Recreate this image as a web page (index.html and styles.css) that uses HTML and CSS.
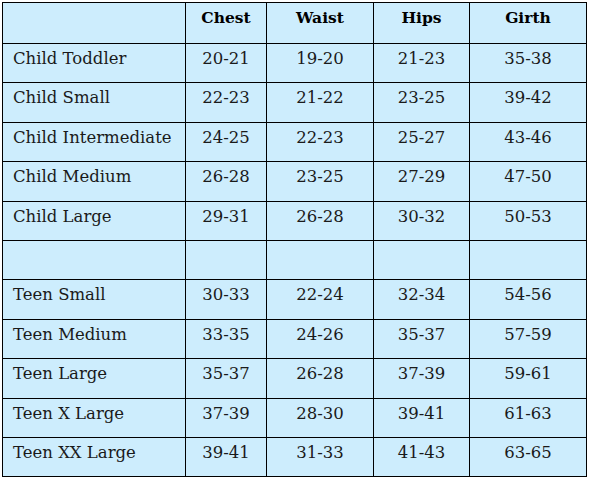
FILE: index.html
```html
<!DOCTYPE html>
<html>
<head>
<meta charset="utf-8">
<link rel="stylesheet" href="styles.css">
</head>
<body>
<div class="page">
<table class="sizes">
  <colgroup>
    <col class="c-name"><col class="c-chest"><col class="c-waist"><col class="c-hips"><col class="c-girth">
  </colgroup>
  <thead>
    <tr class="head"><th></th><th>Chest</th><th>Waist</th><th>Hips</th><th>Girth</th></tr>
  </thead>
  <tbody>
    <tr><td>Child Toddler</td><td>20-21</td><td>19-20</td><td>21-23</td><td>35-38</td></tr>
    <tr><td>Child Small</td><td>22-23</td><td>21-22</td><td>23-25</td><td>39-42</td></tr>
    <tr><td>Child Intermediate</td><td>24-25</td><td>22-23</td><td>25-27</td><td>43-46</td></tr>
    <tr><td>Child Medium</td><td>26-28</td><td>23-25</td><td>27-29</td><td>47-50</td></tr>
    <tr><td>Child Large</td><td>29-31</td><td>26-28</td><td>30-32</td><td>50-53</td></tr>
    <tr><td></td><td></td><td></td><td></td><td></td></tr>
    <tr><td>Teen Small</td><td>30-33</td><td>22-24</td><td>32-34</td><td>54-56</td></tr>
    <tr><td>Teen Medium</td><td>33-35</td><td>24-26</td><td>35-37</td><td>57-59</td></tr>
    <tr><td>Teen Large</td><td>35-37</td><td>26-28</td><td>37-39</td><td>59-61</td></tr>
    <tr><td>Teen X Large</td><td>37-39</td><td>28-30</td><td>39-41</td><td>61-63</td></tr>
    <tr><td>Teen XX Large</td><td>39-41</td><td>31-33</td><td>41-43</td><td>63-65</td></tr>
  </tbody>
</table>
</div>
</body>
</html>
```
FILE: styles.css
```css
html, body {
  margin: 0;
  padding: 0;
  background: #ffffff;
}
.page {
  padding: 2px 0 0 2px;
}
.sizes {
  border-collapse: collapse;
  table-layout: fixed;
  width: 584px;
  background: #cdedfd;
  font-family: "DejaVu Serif", serif;
  font-size: 16.5px;
  color: #1a1a1a;
}
.c-name { width: 183px; }
.c-chest { width: 81px; }
.c-waist { width: 107px; }
.c-hips { width: 96px; }
.c-girth { width: 117px; }
.sizes th, .sizes td {
  border: 1px solid #000;
  padding: 5px 4px 0 10px;
  vertical-align: top;
  text-align: center;
  height: 33.4px;
  box-sizing: content-box;
  white-space: nowrap;
}
.sizes td:first-child {
  text-align: left;
}
.sizes td:not(:first-child), .sizes th {
  padding-left: 4px;
}
.sizes th {
  font-weight: bold;
  font-size: 15.5px;
  color: #000;
  height: 35px;
}
```
